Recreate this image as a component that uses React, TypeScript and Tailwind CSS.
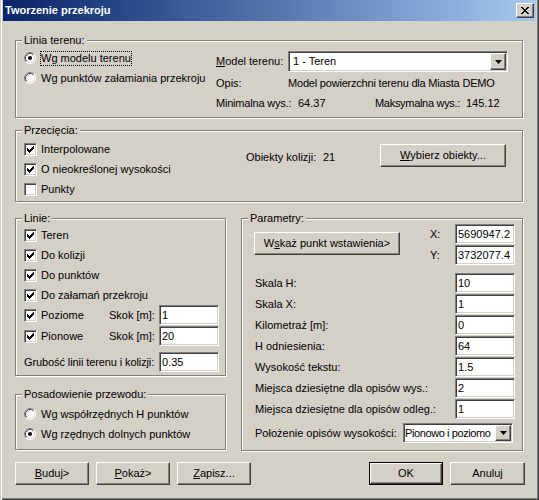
import React from "react";

const RAISED =
  "border border-white border-r-[#404040] border-b-[#404040] shadow-[inset_-1px_-1px_0_#808080]";
const SUNKEN =
  "border border-[#808080] border-r-white border-b-white shadow-[inset_1px_1px_0_#404040,inset_-1px_-1px_0_#d4d0c8]";

function Group({
  label,
  className = "",
  children,
}: {
  label: string;
  className?: string;
  children?: React.ReactNode;
}) {
  return (
    <div
      className={
        "relative border border-[#808080] shadow-[inset_1px_1px_0_#ffffff,1px_1px_0_#ffffff] " +
        className
      }
    >
      <span className="absolute left-[6px] top-[-7px] bg-[#d4d0c8] px-[2px] leading-[13px] whitespace-nowrap">
        {label}
      </span>
      {children}
    </div>
  );
}

function Check({ checked }: { checked?: boolean }) {
  return (
    <div className={"relative w-[13px] h-[13px] shrink-0 bg-white " + SUNKEN}>
      {checked && (
        <svg
          className="absolute left-[1px] top-[1px]"
          width="9"
          height="9"
          viewBox="0 0 9 9"
          shapeRendering="crispEdges"
        >
          <path
            d="M1 3h1v3H1z M2 4h1v3H2z M3 5h1v3H3z M4 4h1v3H4z M5 3h1v3H5z M6 2h1v3H6z M7 1h1v3H7z"
            fill="black"
          />
        </svg>
      )}
    </div>
  );
}

function Radio({ checked }: { checked?: boolean }) {
  return (
    <svg width="12" height="12" viewBox="0 0 12 12" className="shrink-0">
      <circle cx="6" cy="6" r="5.5" fill="white" />
      <path d="M2.11 9.89A5.5 5.5 0 0 1 9.89 2.11" fill="none" stroke="#808080" />
      <path d="M9.89 2.11A5.5 5.5 0 0 1 2.11 9.89" fill="none" stroke="#ffffff" />
      <path d="M2.82 9.18A4.5 4.5 0 0 1 9.18 2.82" fill="none" stroke="#404040" />
      <path d="M9.18 2.82A4.5 4.5 0 0 1 2.82 9.18" fill="none" stroke="#d4d0c8" />
      {checked && <circle cx="6" cy="6" r="2" fill="black" />}
    </svg>
  );
}

function Btn({ className = "", children }: { className?: string; children?: React.ReactNode }) {
  return (
    <div className={"flex items-center justify-center bg-[#d4d0c8] whitespace-nowrap " + RAISED + " " + className}>
      {children}
    </div>
  );
}

function Field({ value, className = "" }: { value: string; className?: string }) {
  return (
    <div className={"flex items-center bg-white pl-[2px] shrink-0 whitespace-nowrap " + SUNKEN + " " + className}>
      {value}
    </div>
  );
}

function Combo({ value, className = "", pad = "pl-[4px]" }: { value: string; className?: string; pad?: string }) {
  return (
    <div className={"flex items-stretch bg-white shrink-0 " + SUNKEN + " " + className}>
      <div className={"flex-1 flex items-center whitespace-nowrap overflow-hidden " + pad}>{value}</div>
      <div className={"w-[16px] m-[1px] shrink-0 flex items-center justify-center bg-[#d4d0c8] " + RAISED}>
        <svg width="7" height="4" viewBox="0 0 7 4">
          <path d="M0 0h7L3.5 4z" fill="black" />
        </svg>
      </div>
    </div>
  );
}

function CheckRow({ label, checked, className = "" }: { label: string; checked?: boolean; className?: string }) {
  return (
    <div className={"h-[20px] flex items-center " + className}>
      <Check checked={checked} />
      <span className="ml-[4px] whitespace-nowrap">{label}</span>
    </div>
  );
}

function RadioRow({ label, checked, focus }: { label: string; checked?: boolean; focus?: boolean }) {
  return (
    <div className="h-[20px] flex items-center">
      <Radio checked={checked} />
      {focus ? (
        <span className="ml-[4px] border border-dotted border-black leading-[13px] whitespace-nowrap">{label}</span>
      ) : (
        <span className="ml-[5px] whitespace-nowrap">{label}</span>
      )}
    </div>
  );
}

function ParamRow({ label, value, className = "mt-[1px]" }: { label: string; value: string; className?: string }) {
  return (
    <div className={"h-[20px] flex items-center " + className}>
      <span className="w-[201px] pl-[1px] whitespace-nowrap">{label}</span>
      <Field value={value} className="w-[60px] h-[20px]" />
    </div>
  );
}

export default function App() {
  return (
    <div className="w-[539px] h-[500px] overflow-hidden bg-[#d4d0c8] px-[3px] pb-[3px] font-['Liberation_Sans',Arial,sans-serif] text-[11px] leading-[13px] text-black shadow-[inset_1px_0_0_#d4d0c8,inset_2px_0_0_#ffffff,inset_-1px_-1px_0_#404040,inset_-2px_-2px_0_#808080]">
      {/* Title bar */}
      <div className="h-[21px] flex items-center justify-between bg-linear-to-r from-[#0a246a] to-[#a6caf0]">
        <span className="pl-[2px] font-bold text-white whitespace-nowrap">Tworzenie przekroju</span>
        <Btn className="w-[18px] h-[15px] mr-[2px]">
          <svg width="8" height="7" viewBox="0 0 8 7" shapeRendering="crispEdges">
            <path d="M0 0h2l2 2.5L6 0h2L5 3.5 8 7H6L4 4.5 2 7H0l3-3.5z" fill="black" />
          </svg>
        </Btn>
      </div>

      <div className="pl-[12px]">
        {/* Linia terenu */}
        <Group label="Linia terenu:" className="mt-[19px] w-[508px] h-[78px] flex">
          <div className="w-[200px] pl-[8px] pt-[7px]">
            <RadioRow label="Wg modelu terenu" checked focus />
            <RadioRow label="Wg punktów załamiania przekroju" />
          </div>
          <div className="pt-[10px]">
            <div className="h-[22px] flex items-start">
              <span className="w-[72px] leading-[21px] whitespace-nowrap">
                <u>M</u>odel terenu:
              </span>
              <Combo value="1 - Teren" className="w-[220px] h-[21px]" />
            </div>
            <div className="h-[20px] flex items-center">
              <span className="w-[72px]">Opis:</span>
              <span className="whitespace-nowrap tracking-[-0.2px]">Model powierzchni terenu dla Miasta DEMO</span>
            </div>
            <div className="h-[20px] flex items-center whitespace-nowrap">
              <span className="w-[82px] tracking-[-0.2px]">Minimalna wys.:</span>
              <span className="w-[77px]">64.37</span>
              <span className="w-[91px] tracking-[-0.3px]">Maksymalna wys.:</span>
              <span>145.12</span>
            </div>
          </div>
        </Group>

        {/* Przecięcia */}
        <Group label="Przecięcia:" className="mt-[12px] w-[508px] h-[72px] flex">
          <div className="w-[230px] pl-[8px] pt-[8px]">
            <CheckRow label="Interpolowane" checked />
            <CheckRow label="O nieokreślonej wysokości" checked />
            <CheckRow label="Punkty" />
          </div>
          <div className="w-[134px] pt-[16px]">
            <div className="h-[20px] flex items-center whitespace-nowrap">
              <span className="w-[77px]">Obiekty kolizji:</span>
              <span>21</span>
            </div>
          </div>
          <div className="pt-[13px]">
            <Btn className="w-[126px] h-[23px]">
              <span>
                <u>W</u>ybierz obiekty...
              </span>
            </Btn>
          </div>
        </Group>

        {/* Lower row */}
        <div className="mt-[16px] flex items-start gap-[15px]">
          <div className="w-[211px] flex flex-col">
            <Group label="Linie:" className="w-[211px] h-[158px] pl-[8px] pt-[6px]">
              <CheckRow label="Teren" checked />
              <CheckRow label="Do kolizji" checked />
              <CheckRow label="Do punktów" checked />
              <CheckRow label="Do załamań przekroju" checked />
              <div className="h-[20px] flex items-center">
                <div className="w-[85px] flex items-center">
                  <Check checked />
                  <span className="ml-[4px]">Poziome</span>
                </div>
                <span className="w-[50px] whitespace-nowrap">Skok [m]:</span>
                <Field value="1" className="w-[60px] h-[20px]" />
              </div>
              <div className="mt-[1px] h-[20px] flex items-center">
                <div className="w-[85px] flex items-center">
                  <Check checked />
                  <span className="ml-[4px]">Pionowe</span>
                </div>
                <span className="w-[50px] whitespace-nowrap">Skok [m]:</span>
                <Field value="20" className="w-[60px] h-[20px]" />
              </div>
              <div className="mt-[6px] h-[20px] flex items-center">
                <span className="w-[135px] whitespace-nowrap tracking-[-0.1px]">Grubość linii terenu i kolizji:</span>
                <Field value="0.35" className="w-[60px] h-[20px]" />
              </div>
            </Group>

            <Group label="Posadowienie przewodu:" className="mt-[18px] w-[211px] h-[56px] pl-[8px] pt-[9px]">
              <RadioRow label="Wg współrzędnych H punktów" />
              <RadioRow label="Wg rzędnych dolnych punktów" checked />
            </Group>
          </div>

          {/* Parametry */}
          <Group label="Parametry:" className="w-[282px] h-[233px] pl-[12px] pt-[5px]">
            <div className="flex items-start">
              <div className="w-[176px] pt-[8px]">
                <Btn className="w-[146px] h-[23px]">
                  <span>
                    W<u>s</u>każ punkt wstawienia&gt;
                  </span>
                </Btn>
              </div>
              <div>
                <div className="h-[20px] flex items-center">
                  <span className="w-[25px]">X:</span>
                  <Field value="5690947.2" className="w-[60px] h-[20px]" />
                </div>
                <div className="mt-[1px] h-[20px] flex items-center">
                  <span className="w-[25px]">Y:</span>
                  <Field value="3732077.4" className="w-[60px] h-[20px]" />
                </div>
              </div>
            </div>
            <ParamRow label="Skala H:" value="10" className="mt-[8px]" />
            <ParamRow label="Skala X:" value="1" />
            <ParamRow label="Kilometraż [m]:" value="0" />
            <ParamRow label="H odniesienia:" value="64" />
            <ParamRow label="Wysokość tekstu:" value="1.5" />
            <ParamRow label="Miejsca dziesiętne dla opisów wys.:" value="2" />
            <ParamRow label="Miejsca dziesiętne dla opisów odleg.:" value="1" />
            <div className="mt-[4px] h-[20px] flex items-center">
              <span className="w-[149px] pl-[1px] whitespace-nowrap">Położenie opisów wysokości:</span>
              <Combo
                value="Pionowo i poziomo"
                className="w-[110px] h-[20px] tracking-[-0.4px]"
                pad="pl-[1px]"
              />
            </div>
          </Group>
        </div>

        {/* Bottom buttons */}
        <div className="mt-[11px] w-[510px] flex">
          <div className="flex gap-[7px]">
            <Btn className="w-[74px] h-[23px]">
              <span>
                <u>B</u>uduj&gt;
              </span>
            </Btn>
            <Btn className="w-[74px] h-[23px]">
              <span>
                <u>P</u>okaż&gt;
              </span>
            </Btn>
            <Btn className="w-[74px] h-[23px]">
              <span>
                <u>Z</u>apisz...
              </span>
            </Btn>
          </div>
          <div className="ml-auto flex gap-[7px]">
            <div className="w-[74px] h-[23px] border border-black">
              <Btn className="w-full h-full">OK</Btn>
            </div>
            <Btn className="w-[75px] h-[23px]">Anuluj</Btn>
          </div>
        </div>
      </div>
    </div>
  );
}
